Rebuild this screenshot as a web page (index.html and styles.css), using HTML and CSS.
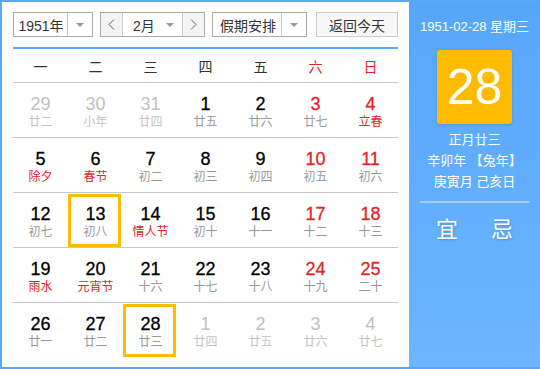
FILE: index.html
```html
<!doctype html>
<html>
<head>
<meta charset="utf-8">
<title>万年历</title>
<link rel="stylesheet" href="styles.css">
</head>
<body>

<div class="calendar">
  <div class="main">
    <div class="toolbar">
      <div class="select year">
        <span class="select-text">1951年</span>
        <span class="select-arrow"><i class="caret"></i></span>
      </div>
      <div class="month-group">
        <span class="nav-btn">
          <svg width="7" height="11" viewBox="0 0 7 11"><polyline points="6,0.5 1,5.5 6,10.5" fill="none" stroke="#666" stroke-width="1"/></svg>
        </span>
        <span class="month-select">
          <span class="select-text">2月</span>
          <i class="caret"></i>
        </span>
        <span class="nav-btn">
          <svg width="7" height="11" viewBox="0 0 7 11"><polyline points="1,0.5 6,5.5 1,10.5" fill="none" stroke="#666" stroke-width="1"/></svg>
        </span>
      </div>
      <div class="select holiday">
        <span class="select-text">假期安排</span>
        <span class="select-arrow"><i class="caret"></i></span>
      </div>
      <button class="today-btn">返回今天</button>
    </div>

    <div class="weekdays">
      <span>一</span><span>二</span><span>三</span><span>四</span><span>五</span>
      <span class="weekend">六</span><span class="weekend">日</span>
    </div>

    <div class="days">
      <div class="day other"><b>29</b><small>廿二</small></div>
      <div class="day other"><b>30</b><small>小年</small></div>
      <div class="day other"><b>31</b><small>廿四</small></div>
      <div class="day"><b>1</b><small>廿五</small></div>
      <div class="day"><b>2</b><small>廿六</small></div>
      <div class="day weekend"><b>3</b><small>廿七</small></div>
      <div class="day weekend festival"><b>4</b><small>立春</small></div>

      <div class="day festival"><b>5</b><small>除夕</small></div>
      <div class="day festival"><b>6</b><small>春节</small></div>
      <div class="day"><b>7</b><small>初二</small></div>
      <div class="day"><b>8</b><small>初三</small></div>
      <div class="day"><b>9</b><small>初四</small></div>
      <div class="day weekend"><b>10</b><small>初五</small></div>
      <div class="day weekend"><b>11</b><small>初六</small></div>

      <div class="day"><b>12</b><small>初七</small></div>
      <div class="day marked"><b>13</b><small>初八</small></div>
      <div class="day festival"><b>14</b><small>情人节</small></div>
      <div class="day"><b>15</b><small>初十</small></div>
      <div class="day"><b>16</b><small>十一</small></div>
      <div class="day weekend"><b>17</b><small>十二</small></div>
      <div class="day weekend"><b>18</b><small>十三</small></div>

      <div class="day festival"><b>19</b><small>雨水</small></div>
      <div class="day festival"><b>20</b><small>元宵节</small></div>
      <div class="day"><b>21</b><small>十六</small></div>
      <div class="day"><b>22</b><small>十七</small></div>
      <div class="day"><b>23</b><small>十八</small></div>
      <div class="day weekend"><b>24</b><small>十九</small></div>
      <div class="day weekend"><b>25</b><small>二十</small></div>

      <div class="day"><b>26</b><small>廿一</small></div>
      <div class="day"><b>27</b><small>廿二</small></div>
      <div class="day marked"><b>28</b><small>廿三</small></div>
      <div class="day other"><b>1</b><small>廿四</small></div>
      <div class="day other"><b>2</b><small>廿五</small></div>
      <div class="day other"><b>3</b><small>廿六</small></div>
      <div class="day other"><b>4</b><small>廿七</small></div>
    </div>
  </div>

  <div class="side">
    <div class="side-date">1951-02-28 星期三</div>
    <div class="big-day">28</div>
    <div class="lunar">
      <p>正月廿三</p>
      <p>辛卯年 【兔年】</p>
      <p>庚寅月 己亥日</p>
    </div>
    <div class="side-line"></div>
    <div class="yiji">
      <span>宜</span><span>忌</span>
    </div>
  </div>
</div>

</body>
</html>
```

FILE: styles.css
```css
body {
  margin: 0;
  font-family: "Liberation Sans", "Noto Sans CJK SC", sans-serif;
  background: #fff;
}

.calendar {
  display: flex;
  width: 540px;
  height: 369px;
  box-sizing: border-box;
  border: 2px solid #5aa9f8;
  border-right: 0;
}

/* left part: toolbar + month grid */
.main {
  width: 407px;
  padding: 10px 11px 0;
  box-sizing: border-box;
  background: #fff;
}

.toolbar {
  display: flex;
  height: 25px;
  font-size: 14px;
  color: #333;
  padding-bottom: 10px;
  border-bottom: 2px solid #5aa9f8;
}

.select {
  display: flex;
  border: 1px solid #aaa;
  box-sizing: border-box;
  height: 25px;
  background: #fff;
}
.select-text {
  flex: 1;
  display: flex;
  align-items: center;
  justify-content: center;
  border-right: 1px solid #ccc;
}
.select-arrow {
  width: 24px;
  display: flex;
  align-items: center;
  justify-content: center;
}
.caret {
  width: 0;
  height: 0;
  border-left: 4px solid transparent;
  border-right: 4px solid transparent;
  border-top: 4px solid #999;
}

.year { width: 80px; }
.year .select-text { padding-left: 1px; }

.month-group {
  display: flex;
  width: 105px;
  height: 25px;
  box-sizing: border-box;
  border: 1px solid #aaa;
  margin-left: 7px;
}
.nav-btn {
  width: 21px;
  display: flex;
  align-items: center;
  justify-content: center;
  background: #f4f4f4;
}
.month-select {
  flex: 1;
  display: flex;
  align-items: center;
  gap: 11px;
  padding-left: 10px;
  border-left: 1px solid #ccc;
  border-right: 1px solid #ccc;
  background: #fff;
}
.month-select .select-text {
  flex: none;
  border: 0;
}

.holiday {
  width: 95px;
  margin-left: 7px;
}
.holiday .select-text { padding-left: 2px; }

.today-btn {
  margin-left: 9px;
  width: 82px;
  height: 25px;
  padding: 0;
  border: 1px solid #ccc;
  background: #f7f7f7;
  font: inherit;
  font-size: 14px;
  color: #333;
}

.weekdays {
  display: grid;
  grid-template-columns: repeat(7, 55px);
  height: 33px;
  align-items: center;
  text-align: center;
  font-size: 14px;
  color: #333;
}
.weekdays .weekend { color: #e02525; }

.days {
  display: grid;
  grid-template-columns: repeat(7, 55px);
  grid-auto-rows: 55px;
}
.day {
  position: relative;
  border-top: 1px solid #c8c8c8;
  box-sizing: border-box;
  display: flex;
  flex-direction: column;
  align-items: center;
  padding-top: 11px;
}
.day b {
  font-weight: normal;
  font-size: 18px;
  line-height: 20px;
  color: #000;
  -webkit-text-stroke: 0.3px #000;
}
.day small {
  font-size: 12px;
  line-height: 16px;
  color: #999;
}
.day.weekend b { color: #e02525; -webkit-text-stroke-color: #e02525; }
.day.festival small { color: #e02525; }
.day.other b { color: #c0c0c0; -webkit-text-stroke: 0; }
.day.other small { color: #c4c4c4; }

.day.marked::after {
  content: "";
  position: absolute;
  top: 1px;
  left: 0;
  right: 2px;
  bottom: 0;
  border: 3px solid #ffbb00;
}

/* right part */
.side {
  flex: 1;
  display: flex;
  flex-direction: column;
  align-items: center;
  background: linear-gradient(#56a6fb, #6db6ff);
  color: #fff;
  padding-top: 16px;
}
.side-date {
  font-size: 13px;
  line-height: 18px;
}
.big-day {
  margin-top: 14px;
  width: 75px;
  height: 74px;
  border-radius: 3px;
  background: #ffbb00;
  box-shadow: 0 1px 3px rgba(0, 0, 0, 0.15);
  font-size: 50px;
  line-height: 74px;
  text-align: center;
}
.lunar {
  margin-top: 5px;
  text-align: center;
  font-size: 13px;
  line-height: 21px;
}
.lunar p { margin: 0; }

.side-line {
  margin-top: 9px;
  width: 110px;
  height: 2px;
  background: #9dcdff;
}
.yiji {
  display: flex;
  margin-top: 14px;
  font-size: 22px;
  line-height: 26px;
  text-shadow: 1px 1px 2px rgba(0, 0, 0, 0.2);
}
.yiji span {
  width: 55px;
  text-align: center;
}
```
